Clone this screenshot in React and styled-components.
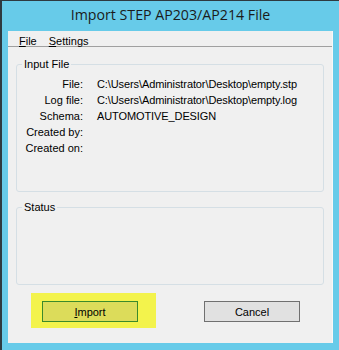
import React from "react";
import styled, { createGlobalStyle } from "styled-components";

const GlobalStyle = createGlobalStyle`
  body {
    margin: 0;
    font-family: "Liberation Sans", Arial, sans-serif;
    font-size: 11px;
    color: #000;
  }
`;

const Window = styled.div`
  width: 339px;
  height: 350px;
  box-sizing: border-box;
  background: #67cbe9;
  border-top: 1px solid #2e3a40;
  border-left: 2px solid #2e3a40;
  padding: 0 6px 7px 6px;
  display: flex;
  flex-direction: column;
`;

const TitleBar = styled.div`
  height: 30px;
  box-sizing: border-box;
  padding-bottom: 3px;
  display: flex;
  align-items: center;
  justify-content: center;
  font-family: "Open Sans", "Noto Sans", sans-serif;
  font-size: 14.2px;
  color: #1b1b1b;
`;

const Client = styled.div`
  flex: 1;
  background: #f0f0f0;
  display: flex;
  flex-direction: column;
  border-right: 1px solid #f8f8f8;
`;

const MenuBar = styled.div`
  height: 16px;
  box-sizing: border-box;
  padding: 4px 0 0 11px;
  border-bottom: 1px solid #a0a0a0;
  display: flex;
  gap: 12px;
`;

const MenuItem = styled.span`
  line-height: 13px;
`;

const Group = styled.fieldset`
  margin: ${({ top }) => top}px 8px 0 8px;
  padding: 0 0 0 4px;
  height: ${({ h }) => h}px;
  box-sizing: border-box;
  border: 1px solid #d5dfe5;
  border-radius: 3px;
  min-width: 0;
`;

const Legend = styled.legend`
  padding: 0 2px;
  margin-left: 1px;
  line-height: 14px;
`;

const Rows = styled.div`
  display: grid;
  grid-template-columns: 62px 1fr;
  column-gap: 14px;
  padding-top: 5px;
`;

const Label = styled.div`
  text-align: right;
  line-height: ${({ h }) => h || 16}px;
`;

const Value = styled.div`
  line-height: ${({ h }) => h || 16}px;
  white-space: nowrap;
  letter-spacing: -0.1px;
`;

const ButtonRow = styled.div`
  display: flex;
  align-items: flex-start;
  margin-top: 8px;
  padding-left: 23px;
`;

const Highlight = styled.div`
  background: #f3f34c;
  padding: 8px 18px 6px 11px;
`;

const Button = styled.button`
  width: 96px;
  height: 21px;
  box-sizing: border-box;
  font-family: "Liberation Sans", Arial, sans-serif;
  font-size: 11px;
  color: #000;
  padding: 0;
  border: 1px solid ${({ accent }) => (accent ? "#3b8a2b" : "#707070")};
  background: ${({ accent }) => (accent ? "#dcdc5a" : "#e1e1e1")};
`;

const CancelSlot = styled.div`
  margin-left: 48px;
  margin-top: 8px;
`;

const fields = [
  ["File:", "C:\\Users\\Administrator\\Desktop\\empty.stp"],
  ["Log file:", "C:\\Users\\Administrator\\Desktop\\empty.log"],
  ["Schema:", "AUTOMOTIVE_DESIGN"],
  ["Created by:", ""],
  ["Created on:", "", 17],
];

export default function App() {
  return (
    <>
      <GlobalStyle />
      <Window>
        <TitleBar>Import STEP AP203/AP214 File</TitleBar>
        <Client>
          <MenuBar>
            <MenuItem>
              <u>F</u>ile
            </MenuItem>
            <MenuItem>
              <u>S</u>ettings
            </MenuItem>
          </MenuBar>
          <Group top={10} h={135}>
            <Legend>Input File</Legend>
            <Rows>
              {fields.map(([label, value, h]) => (
                <React.Fragment key={label}>
                  <Label h={h}>{label}</Label>
                  <Value h={h}>{value}</Value>
                </React.Fragment>
              ))}
            </Rows>
          </Group>
          <Group top={8} h={85}>
            <Legend>Status</Legend>
          </Group>
          <ButtonRow>
            <Highlight>
              <Button accent>
                <u>I</u>mport
              </Button>
            </Highlight>
            <CancelSlot>
              <Button>Cancel</Button>
            </CancelSlot>
          </ButtonRow>
        </Client>
      </Window>
    </>
  );
}
